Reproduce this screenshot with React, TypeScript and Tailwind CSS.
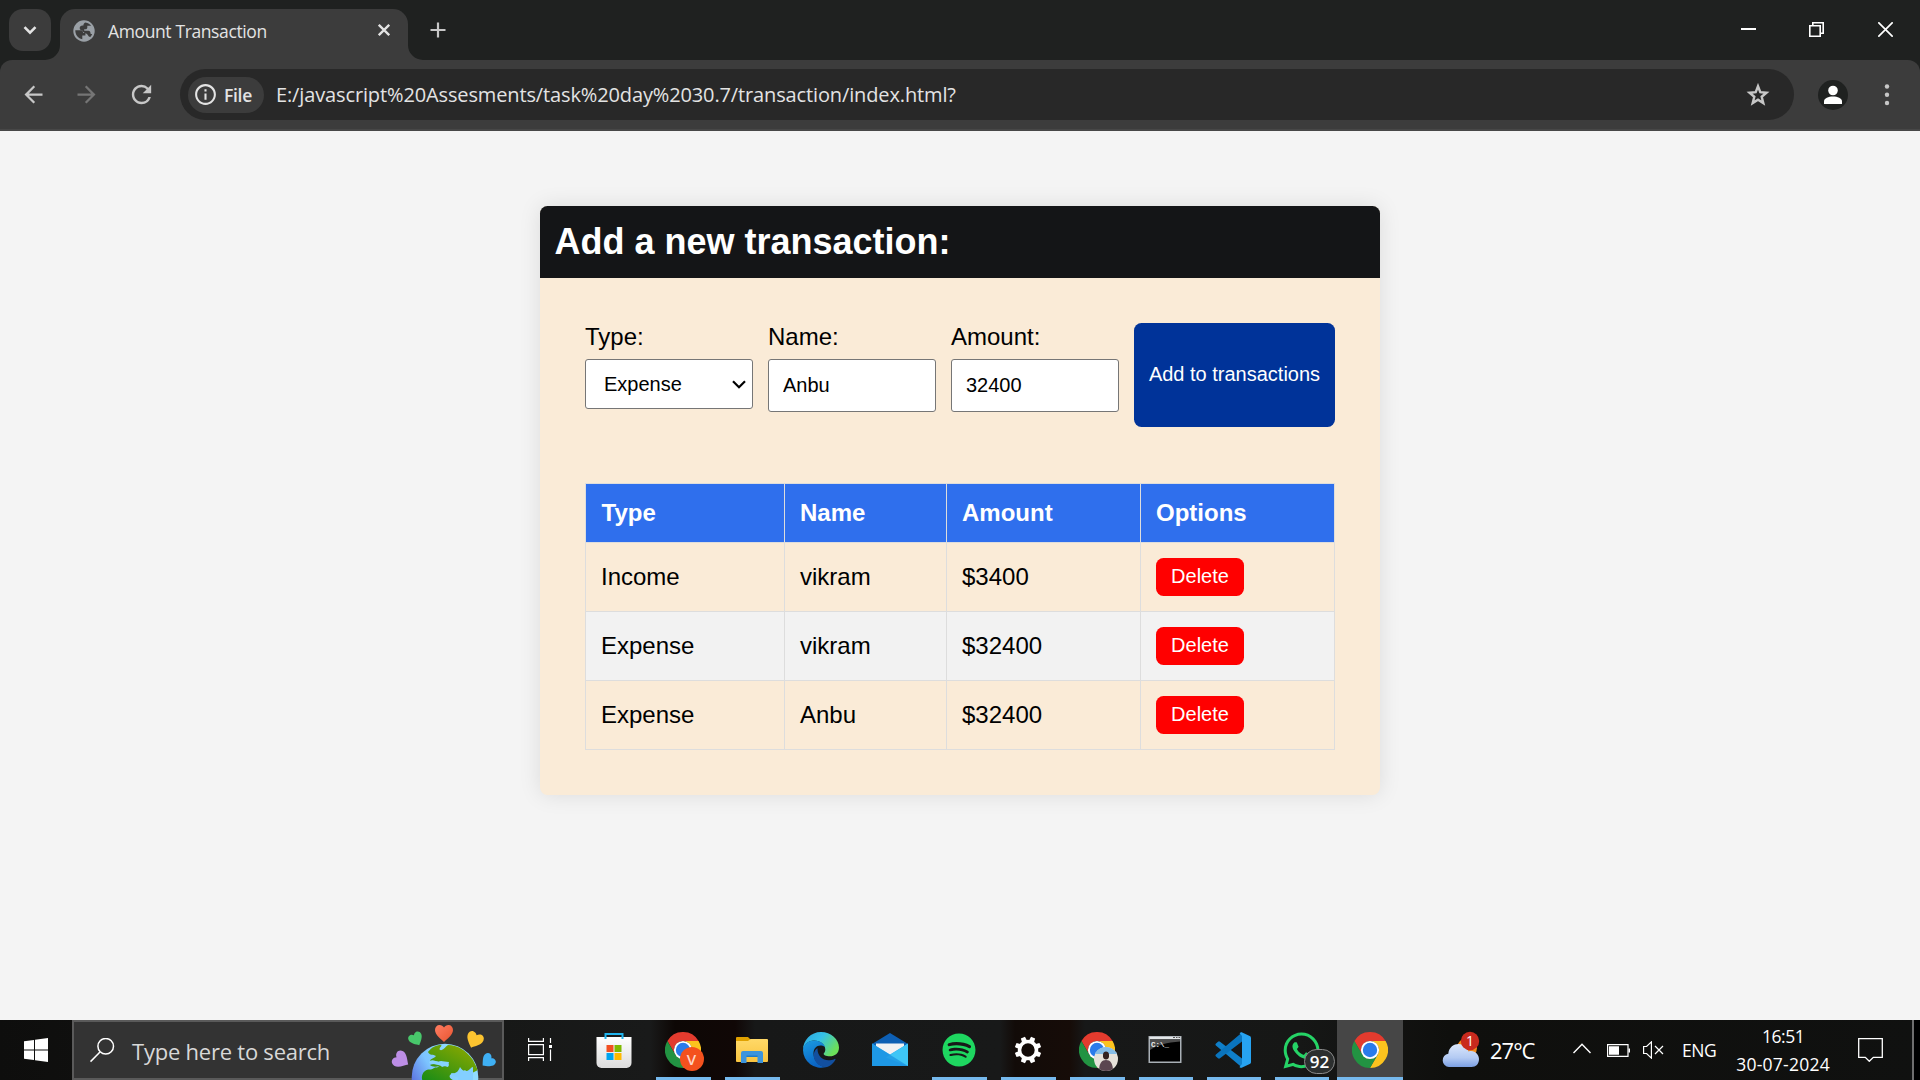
import type { ReactNode } from "react";
import { MdArrowBack, MdArrowForward, MdInfoOutline, MdRefresh } from "react-icons/md";
import { FaSpotify, FaWhatsapp } from "react-icons/fa";

/* ---------- Browser chrome ---------- */

function TabStrip() {
  return (
    <div className="flex h-[60px] items-start bg-[#1f2120]">
      <div className="mt-[9px] ml-[9px] flex size-[42px] items-center justify-center rounded-[14px] bg-[#3c3c3c]">
        <svg width="42" height="42" viewBox="0 0 42 42" fill="none" stroke="#e3e3e3" strokeWidth="2.6">
          <path d="M15.5 18.2l5.5 5.5 5.5-5.5" />
        </svg>
      </div>
      <svg className="mt-[45px] -ml-[6px]" width="15" height="15" viewBox="0 0 15 15">
        <path d="M15 0v15H0A15 15 0 0 0 15 0z" fill="#3c3c3c" />
      </svg>
      <div className="mt-[9px] flex h-[51px] w-[348px] rounded-t-[15px] bg-[#3c3c3c] pl-[13px]">
        <svg className="mt-[10.5px]" width="22" height="22" viewBox="0 0 22 22">
          <circle cx="11" cy="11" r="10.7" fill="#9aa0a6" />
          <path
            d="M2.3 10.300h5.200c1.900 0 2.600 1 2.600 2.600h2.300v2.600H9.300v3.800C5.200 18.500 2.300 15.200 2.300 10.300z"
            fill="#3c3c3c"
          />
          <path
            d="M12.300 2.400c3 .4 4.700 1.700 5.900 3.400h-3.900v1.700c0 1-.8 1.800-1.800 1.800h-1.300v1.500h4.300c1 0 1.700.7 1.900 1.700l.3 1.500h1.500c-.4 1.200-1 2.100-1.900 3-2.400-.3-2.200-3.300-4.400-3.600-1.500-.2-3-1.400-3.200-2.600-2.200-.2-3-1.400-3-2.800 0-1.500 1.200-2.600 2.800-2.600h.9c0-1.400.7-2.600 1.900-3z"
            fill="#3c3c3c"
          />
        </svg>
        <div className="mt-[6px] ml-[13px] w-[270px] font-['Open_Sans',sans-serif] text-[17.5px] leading-[32px] tracking-[-0.38px] text-[#e3e3e3]">
          Amount Transaction
        </div>
        <svg className="mt-[15px]" width="12" height="12" viewBox="0 0 12 12" stroke="#e3e3e3" strokeWidth="2.3">
          <path d="M.8.8l10.400 10.400M11.200.8L.8 11.200" />
        </svg>
      </div>
      <svg className="mt-[45px]" width="15" height="15" viewBox="0 0 15 15">
        <path d="M0 0v15h15A15 15 0 0 1 0 0z" fill="#3c3c3c" />
      </svg>
      <svg className="mt-[22px] ml-[7px]" width="16" height="16" viewBox="0 0 16 16" stroke="#c7c7c7" strokeWidth="2.2">
        <path d="M8 .5v15M.5 8h15" />
      </svg>
      <div className="mt-[22px] mr-[27px] ml-auto flex">
        <svg className="mr-[53px]" width="15" height="15" viewBox="0 0 15 15" stroke="#fff" strokeWidth="2">
          <path d="M0 7h15" />
        </svg>
        <svg className="mr-[54px]" width="15" height="15" viewBox="0 0 15 15" fill="none" stroke="#fff" strokeWidth="1.6">
          <path d="M.8 3.800h10.400v10.400H.8zM3.800 3.800V.8h10.400v10.400h-3" />
        </svg>
        <svg width="15" height="15" viewBox="0 0 15 15" stroke="#fff" strokeWidth="1.7">
          <path d="M.3.3l14.400 14.400M14.700.3L.3 14.700" />
        </svg>
      </div>
    </div>
  );
}

function Toolbar() {
  return (
    <div className="h-[71px] bg-[#1f2120]">
      <div className="flex h-[71px] items-start rounded-t-[12px] border-b-2 border-[#474747] bg-[#3c3c3c]">
        <MdArrowBack className="mt-[21px] ml-[19.5px] size-[27px] text-[#c7c7c7]" />
        <MdArrowForward className="mt-[21px] ml-[26.5px] size-[27px] text-[#757575]" />
        <MdRefresh className="mt-[20px] ml-[26.5px] size-[29px] text-[#c7c7c7]" />
        <div className="mt-[9px] ml-[24.5px] flex h-[51px] w-[1614px] items-center rounded-full bg-[#282828] pl-2">
          <div className="flex h-9 w-[76px] items-center rounded-full bg-[#3c3c3c] pl-[5px]">
            <MdInfoOutline className="size-[25px] text-[#e3e3e3]" />
            <span className="ml-[6px] font-['Open_Sans',sans-serif] text-[17.5px] leading-[32px] font-semibold tracking-[-0.3px] text-[#e3e3e3]">
              File
            </span>
          </div>
          <div className="ml-3 flex-1 font-['Open_Sans',sans-serif] text-[20px] leading-[32px] tracking-[-0.13px] whitespace-nowrap text-[#e3e3e3]">
            E:/javascript%20Assesments/task%20day%2030.7/transaction/index.html?
          </div>
          <svg className="mr-[24px]" width="24" height="24" viewBox="0 0 24 24" fill="none" stroke="#c7c7c7" strokeWidth="2.400">
            <path d="M12 3.200l2.300 6 6.200.5-4.800 4.100 1.600 6.300L12 16.700l-5.300 3.400 1.600-6.300-4.800-4.100 6.200-.5z" />
          </svg>
        </div>
        <svg className="mt-[20px] ml-6" width="30" height="30" viewBox="0 0 30 30">
          <circle cx="15" cy="15" r="15" fill="#1f2120" />
          <circle cx="15" cy="10.5" r="4.8" fill="#fff" />
          <path d="M6 24v-2.500c0-3.300 4.500-5 9-5s9 1.700 9 5V24z" fill="#fff" />
        </svg>
        <svg className="mt-[24px] ml-[36px]" width="6" height="22" viewBox="0 0 6 22" fill="#c7c7c7">
          <circle cx="3" cy="2.5" r="2.2" />
          <circle cx="3" cy="10.7" r="2.2" />
          <circle cx="3" cy="19" r="2.2" />
        </svg>
      </div>
    </div>
  );
}

/* ---------- Page ---------- */

const rows = [
  { type: "Income", name: "vikram", amount: "$3400" },
  { type: "Expense", name: "vikram", amount: "$32400" },
  { type: "Expense", name: "Anbu", amount: "$32400" },
];

function Field({ label, children }: { label: string; children: ReactNode }) {
  return (
    <div className="w-[168px]">
      <div className="h-9 text-2xl leading-[27px]">{label}</div>
      {children}
    </div>
  );
}

function TransactionCard() {
  return (
    <div className="mx-auto h-[589px] w-[840px] rounded-[7.5px] bg-[#faebd7] font-['Liberation_Sans',Arial,sans-serif] text-black shadow-[0_0_22px_rgba(0,0,0,0.1)]">
      <h2 className="h-[72px] rounded-t-[7.5px] bg-[#141517] px-[14.5px] pt-[15px] text-[36px] leading-[41px] font-bold text-white">
        Add a new transaction:
      </h2>
      <div className="px-[45px] pt-[45px]">
        <div className="flex gap-[15px]">
          <Field label="Type:">
            <div className="flex h-[50px] items-center rounded-[3px] border border-[#767676] bg-white pr-[6px] pl-[18px] text-[20px]">
              <span className="flex-1">Expense</span>
              <svg width="14" height="9" viewBox="0 0 14 9" fill="none" stroke="#000" strokeWidth="2.2">
                <path d="M1 1.200l6 6 6-6" />
              </svg>
            </div>
          </Field>
          <Field label="Name:">
            <input
              className="block h-[53px] w-full rounded-[3px] border border-[#767676] bg-white px-[14px] text-[20px]"
              defaultValue="Anbu"
            />
          </Field>
          <Field label="Amount:">
            <input
              className="block h-[53px] w-full rounded-[3px] border border-[#767676] bg-white px-[14px] text-[20px]"
              defaultValue="32400"
            />
          </Field>
          <button className="h-[104px] w-[201px] rounded-[7.5px] bg-[#003399] pb-[3px] text-[20px] whitespace-nowrap text-white">
            Add to transactions
          </button>
        </div>
        <table className="mt-[56px] w-[750px] table-fixed border-collapse text-left text-2xl">
          <colgroup>
            <col className="w-[199px]" />
            <col className="w-[162px]" />
            <col className="w-[194px]" />
            <col className="w-[194px]" />
          </colgroup>
          <thead>
            <tr className="h-[59px] bg-[#2f6fed] text-white">
              {["Type", "Name", "Amount", "Options"].map((h) => (
                <th
                  key={h}
                  className="border border-[#dddddd] px-[15px] pt-0 pb-[2px] leading-[27px] font-bold first:pl-[15.5px]"
                >
                  {h}
                </th>
              ))}
            </tr>
          </thead>
          <tbody>
            {rows.map((r, i) => (
              <tr key={i} className="h-[69px] even:bg-[#f2f2f2]">
                <td className="border border-[#dddddd] px-[15px] pt-0 pb-[2px] leading-[27px]">{r.type}</td>
                <td className="border border-[#dddddd] px-[15px] pt-0 pb-[2px] leading-[27px]">{r.name}</td>
                <td className="border border-[#dddddd] px-[15px] pt-0 pb-[2px] leading-[27px]">{r.amount}</td>
                <td className="border border-[#dddddd] px-[15px] py-0">
                  <button className="block h-[38px] w-[88px] rounded-[7.5px] bg-[#ff0000] pb-[2px] text-[20px] leading-[23px] text-white">
                    Delete
                  </button>
                </td>
              </tr>
            ))}
          </tbody>
        </table>
      </div>
    </div>
  );
}

/* ---------- Taskbar icons ---------- */

function ChromeLogo() {
  return (
    <svg width="36" height="36" viewBox="0 0 36 36">
      <path d="M2.410 9A18 18 0 0 1 33.590 9H18A9 9 0 0 0 10.210 22.500z" fill="#e33b2e" />
      <path d="M33.590 9A18 18 0 0 1 18 36L25.790 22.500A9 9 0 0 0 18 9z" fill="#fcc31e" />
      <path d="M18 36A18 18 0 0 1 2.410 9L10.210 22.500A9 9 0 0 0 25.790 22.500z" fill="#229342" />
      <circle cx="18" cy="18" r="9.1" fill="#fff" />
      <circle cx="18" cy="18" r="7.2" fill="#2a7bea" />
    </svg>
  );
}

function StoreIcon() {
  return (
    <svg width="36" height="36" viewBox="0 0 36 36">
      <defs>
        <linearGradient id="store" x1="0" y1="0" x2="0" y2="1">
          <stop offset="0" stopColor="#fff" />
          <stop offset="1" stopColor="#dcdcdc" />
        </linearGradient>
      </defs>
      <path d="M.5 5h35v26a5 5 0 0 1-5 5h-25a5 5 0 0 1-5-5z" fill="url(#store)" />
      <path d="M9.500 7V2h17v5" fill="none" stroke="#1fb4ee" strokeWidth="2" />
      <path d="M10.500 13h7v7h-7z" fill="#f25022" />
      <path d="M18.500 13h7v7h-7z" fill="#7fba00" />
      <path d="M10.500 21h7v7h-7z" fill="#00a4ef" />
      <path d="M18.500 21h7v7h-7z" fill="#ffb900" />
    </svg>
  );
}

function ExplorerIcon() {
  return (
    <svg width="36" height="36" viewBox="0 0 36 36">
      <defs>
        <linearGradient id="folder" x1="0" y1="0" x2="0" y2="1">
          <stop offset="0" stopColor="#ffd968" />
          <stop offset="1" stopColor="#f9c440" />
        </linearGradient>
      </defs>
      <path d="M2 6a1 1 0 0 1 1-1h11l2.500 2.500L14 11H2z" fill="#e0a100" />
      <path d="M2 9h12l2.500-2H33a1 1 0 0 1 1 1v21a1 1 0 0 1-1 1H3a1 1 0 0 1-1-1z" fill="url(#folder)" />
      <path d="M7 31V21a2 2 0 0 1 2-2h18a2 2 0 0 1 2 2v10h-5.500v-6h-11v6z" fill="#3c94dc" />
      <path d="M12.500 25h11v-1.500h-11z" fill="#1e7ac8" />
    </svg>
  );
}

function EdgeIcon() {
  return (
    <svg width="36" height="36" viewBox="0 0 36 36">
      <defs>
        <linearGradient id="edgeTop" x1="0" y1="0" x2="1" y2=".5">
          <stop offset="0" stopColor="#2aa5dd" />
          <stop offset=".5" stopColor="#35c1e8" />
          <stop offset="1" stopColor="#6be05a" />
        </linearGradient>
        <linearGradient id="edgeLeft" x1="0" y1="0" x2=".4" y2="1">
          <stop offset="0" stopColor="#1b9de2" />
          <stop offset="1" stopColor="#0a63c4" />
        </linearGradient>
      </defs>
      <path
        d="M0 18C0 8 8 0 18 0s18 7.500 18 15.500c0 6-4.500 8.800-9 8.800-4.300 0-6.700-1.500-6.300-2.800.8-.9 1.600-2.200 1.600-4.100C22.300 12.500 17 8.500 11 8.500 5.500 8.500 1.500 12 0 18z"
        fill="url(#edgeTop)"
      />
      <path
        d="M0 18c.3-5.500 5.300-9.500 11-9.500 5.200 0 9.800 2.600 11 6.500-6-3.500-11.500 0-11.500 6.500 0 7 5.500 13 12.500 13.600A18 18 0 0 1 0 18z"
        fill="url(#edgeLeft)"
      />
      <path
        d="M14.500 16c-4.500 3-5 9.500-1.500 14 3.500 4.800 9 6.500 13 4.200 2.800-1.500 5.200-4 6.500-6.700.2-.6-.4-.9-.9-.6C23 31 14 26 14.500 16z"
        fill="#124f9f"
      />
    </svg>
  );
}

function MailIcon() {
  return (
    <svg width="36" height="36" viewBox="0 0 36 36">
      <path d="M0 12L18 1l18 11v4H0z" fill="#0d5fb4" />
      <path d="M4 11.500h28V20L18 30 4 20z" fill="#f1f1f3" />
      <path d="M0 11.500L18 22.500l18-11V34H0z" fill="#2ba9ee" />
      <path d="M36 11.500L14 25.500 36 34z" fill="#3ec6f6" />
      <path d="M0 11.500L36 34H0z" fill="#1b93e2" opacity=".75" />
    </svg>
  );
}

function GearIcon() {
  const teeth = [22.5, 67.5, 112.5, 157.5, 202.5, 247.5, 292.5, 337.5];
  return (
    <svg width="36" height="36" viewBox="0 0 36 36">
      <circle cx="18" cy="18" r="8.5" fill="none" stroke="#fff" strokeWidth="3.6" />
      {teeth.map((a) => (
        <path key={a} d="M15.300 9.500l.5-4.800h4.400l.5 4.800z" fill="#fff" transform={`rotate(${a} 18 18)`} />
      ))}
    </svg>
  );
}

function TerminalIcon() {
  return (
    <svg width="36" height="36" viewBox="0 0 36 36">
      <path d="M1.500 4h33v27h-33z" fill="#a9b0b6" />
      <path d="M2.500 4.800h31v2.200h-31z" fill="#e3e6e8" />
      <path d="M26 5h2v1h-2zM29 5h1.500v1H29zM31.500 5H33v1h-1.500z" fill="#555" />
      <path d="M3 7.500h30V29.500H3z" fill="#000" />
      <path d="M3 7.500h30v2C20 10.500 10 13 3 18z" fill="#4c4c4c" />
      <text x="4" y="14.5" fill="#eee" fontFamily="Liberation Mono, monospace" fontSize="7.5" fontWeight="bold">
        C:\_
      </text>
    </svg>
  );
}

function CodeIcon() {
  return (
    <svg width="36" height="36" viewBox="0 0 36 36">
      <path d="M1 11.500l2-1.800a1.500 1.500 0 0 1 2 0L27 26.500V35.500L.900 13.500a1.400 1.400 0 0 1 .100-2z" fill="#0f7fc9" />
      <path d="M1 24.500l2 1.800a1.500 1.500 0 0 0 2 0L27 9.500V.500L.900 22.500a1.400 1.400 0 0 0 .100 2z" fill="#0a74bd" />
      <path
        d="M25.500 35.700c-.8-.3-1-.6-1-.6l2.500-3V4l-2.500-3s.3-.4 1.200-.6c.5-.2 1-.1 1.500.1l7.500 3.500c.8.400 1.300 1.200 1.300 2v24c0 .9-.5 1.600-1.300 2l-7.500 3.600c-.5.200-1.100.3-1.700.1z"
        fill="#27a3f1"
      />
    </svg>
  );
}

function TaskViewIcon() {
  return (
    <svg width="24" height="24" viewBox="0 0 24 24" fill="none" stroke="#fff" strokeWidth="1.2">
      <path d="M.6 0v3.400h14.800V0M.6 6.600h14.800v10H.6zM.6 23v-3.400h14.800V23M22.500 0v5M22.500 11.500V23" />
      <path d="M21 7h3v3h-3z" fill="#fff" stroke="none" />
    </svg>
  );
}

function Heart({ x, y, size, angle, color }: { x: number; y: number; size: number; angle: number; color: string }) {
  return (
    <path
      d="M0 9C-3 6-9 2-9-3c0-3 2-5 4.500-5C-2.500-8-1-7 0-5.500 1-7 2.500-8 4.500-8 7-8 9-6 9-3c0 5-6 9-9 12z"
      fill={color}
      transform={`translate(${x} ${y}) rotate(${angle}) scale(${size})`}
    />
  );
}

function EarthArt() {
  return (
    <svg width="106" height="60" viewBox="0 0 106 60">
      <defs>
        <linearGradient id="ocean" x1="0" y1=".6" x2=".7" y2=".2">
          <stop offset="0" stopColor="#5a6fe0" />
          <stop offset=".45" stopColor="#7cc4ff" />
          <stop offset="1" stopColor="#90dcff" />
        </linearGradient>
        <linearGradient id="land" x1="0" y1="1" x2=".8" y2="0">
          <stop offset="0" stopColor="#128a18" />
          <stop offset="1" stopColor="#8aa800" />
        </linearGradient>
        <linearGradient id="redHeart" x1="0" y1="0" x2="1" y2="1">
          <stop offset="0" stopColor="#ff7d62" />
          <stop offset="1" stopColor="#e8542f" />
        </linearGradient>
        <clipPath id="globe">
          <circle cx="55" cy="57" r="33.3" />
        </clipPath>
      </defs>
      <circle cx="55" cy="57" r="33.3" fill="url(#ocean)" />
      <g clipPath="url(#globe)">
        <path
          d="M38 32c4-5 8-7 13-7 2 1-3 3-1 5 3 1 5-3 8-5 9 0 18 5 25 15l5 10-6 3c-5 2-5-5-9-2-3 2 0 4-3 4-4-1-7-3-10 0-2 4 4 4 5 8H34c-3-3-3-9 1-12 3-3 6 0 9-3 2-1 4 0 5-2-3 1-7 1-9-1 3-2 7 0 10-2-3-3-6-1-9-1-3-3 3-3 5-6-3-2-6 0-8-4z"
          fill="url(#land)"
        />
        <path d="M39 43c1-5 7-2 9-1 3-2 6 0 11 0-1 3 1 2-1 5-3-1-4-1-6 0-2-3-8-2-13-4z" fill="#86d3ff" />
        <path d="M61 53c5 1 7-1 9-6 2 3 4 5 7 4s4-4 6-4v13H68c1-5-6-2-7-7z" fill="#83cfff" />
      </g>
      <Heart x={54} y={13} size={1} angle={0} color="url(#redHeart)" />
      <Heart x={26} y={19} size={0.78} angle={-28} color="#48c76b" />
      <Heart x={84.5} y={20} size={0.94} angle={24} color="#fcc430" />
      <Heart x={11} y={40} size={0.94} angle={-58} color="#bd8ee6" />
      <Heart x={98} y={41} size={0.78} angle={50} color="#3fb0f4" />
    </svg>
  );
}

function WeatherIcon() {
  return (
    <svg width="38" height="38" viewBox="0 0 38 38">
      <defs>
        <linearGradient id="cloud" x1="0" y1="0" x2="0" y2="1">
          <stop offset="0" stopColor="#dbe7fb" />
          <stop offset=".6" stopColor="#b3caf3" />
          <stop offset="1" stopColor="#7b9fe2" />
        </linearGradient>
      </defs>
      <circle cx="25" cy="17" r="10" fill="#f08a1c" />
      <path
        d="M7 36a6.700 6.700 0 0 1-.7-13.300C7 16 12 13 16.500 13c5 0 8.500 3 10 7.500C32 18.500 37 23 37 28c0 5-3 8-7.500 8z"
        fill="url(#cloud)"
      />
      <circle cx="28" cy="10" r="9.2" fill="#c92a1e" />
      <text x="28" y="15" fill="#fff" fontFamily="Open Sans, sans-serif" fontSize="14" textAnchor="middle">
        1
      </text>
    </svg>
  );
}

/* ---------- Taskbar ---------- */

type Slot = { icon: ReactNode; width: string; line?: string };

const slots: Slot[] = [
  { icon: <StoreIcon />, width: "w-[69px]" },
  {
    width: "w-[69px]",
    line: "w-[55px]",
    icon: (
      <>
        <ChromeLogo />
        <span className="absolute top-[15px] left-[15px] flex size-[24px] items-center justify-center rounded-full bg-[#f4511e] font-['Open_Sans',sans-serif] text-[15px] leading-none font-semibold text-[#ffd6c8]">
          V
        </span>
      </>
    ),
  },
  { icon: <ExplorerIcon />, width: "w-[69px]", line: "w-[55px]" },
  { icon: <EdgeIcon />, width: "w-[69px]" },
  { icon: <MailIcon />, width: "w-[69px]" },
  { icon: <FaSpotify className="size-[34px] text-[#1ed760]" />, width: "w-[69px]", line: "w-[55px]" },
  { icon: <GearIcon />, width: "w-[69px]", line: "w-[55px]" },
  {
    width: "w-[69px]",
    line: "w-[55px]",
    icon: (
      <>
        <ChromeLogo />
        <svg className="absolute top-[15px] left-[15.5px]" width="24" height="24" viewBox="0 0 24 24">
          <defs>
            <clipPath id="avatar">
              <circle cx="12" cy="12" r="12" />
            </clipPath>
          </defs>
          <g clipPath="url(#avatar)">
            <path d="M0 0h24v24H0z" fill="#e6e2da" />
            <path d="M0 0h24v7H0z" fill="#86bde6" />
            <path d="M5 24c0-8 3-11 7-11s7 3 7 11z" fill="#5b4650" />
            <path d="M9 7.500c0-4 6-4 6 0v2c0 4-6 4-6 0z" fill="#33221f" />
          </g>
        </svg>
      </>
    ),
  },
  { icon: <TerminalIcon />, width: "w-[68px]", line: "w-[54px]" },
  { icon: <CodeIcon />, width: "w-[68px]", line: "w-[54px]" },
  {
    width: "w-[68px]",
    line: "w-[54px]",
    icon: (
      <>
        <FaWhatsapp className="size-[41px] shrink-0 text-[#25d366]" />
        <span className="absolute top-[17px] left-[21px] flex h-[25px] w-[31px] items-center justify-center rounded-full border border-[#8a8a8a] bg-[#2c2f2f] font-['Open_Sans',sans-serif] text-[17px] leading-none font-semibold text-white">
          92
        </span>
      </>
    ),
  },
];

function Taskbar() {
  return (
    <div className="flex h-[60px] bg-[linear-gradient(90deg,#0e0e0d_0px,#171817_500px,#191a1a_650px,#0d0705_675px,#100706_735px,#171818_755px,#181919_1000px,#120b08_1015px,#160c08_1070px,#171818_1085px,#161716_1300px,#0f0f0d_1450px,#101110_1920px)] font-['Open_Sans',sans-serif] text-white">
      <div className="w-[72px] pt-[18px] pl-6">
        <svg width="24" height="24" viewBox="0 0 24 24" fill="#fff">
          <path d="M0 3.300l10-1.400v9.600H0zM11 1.800L24 0v11.500H11zM0 12.500h10v9.600l-10-1.400zM11 12.500h13V24l-13-1.800z" />
        </svg>
      </div>
      <div className="relative flex w-[432px] border-2 border-[#5a5a5a] bg-[#333333]">
        <svg className="mt-4 ml-4" width="25" height="25" viewBox="0 0 25 25" fill="none" stroke="#fff" strokeWidth="1.5">
          <circle cx="15.7" cy="8.3" r="7.8" />
          <path d="M10 14L.5 23.600" />
        </svg>
        <span className="mt-[11px] ml-[17px] text-[22px] leading-[36px] tracking-[-0.23px] whitespace-nowrap text-[#d8d8d8]">
          Type here to search
        </span>
        <div className="absolute -top-[2px] right-[6px]">
          <EarthArt />
        </div>
      </div>
      <div className="w-[76px] pt-[18px] pl-6">
        <TaskViewIcon />
      </div>
      {slots.map((s, i) => (
        <div key={i} className={`flex shrink-0 flex-col items-center ${s.width}`}>
          <div className="flex h-[57px] items-center pt-[3px] pr-[2px]">
            <div className="relative flex size-9 items-center justify-center">{s.icon}</div>
          </div>
          {s.line && <div className={`h-[3px] bg-[#76b9ed] ${s.line}`} />}
        </div>
      ))}
      <div className="ml-px flex w-[66px] shrink-0 flex-col items-center bg-[#464646]">
        <div className="flex h-[57px] items-center pt-[3px]">
          <ChromeLogo />
        </div>
        <div className="h-[3px] w-full bg-[#76b9ed]" />
      </div>
      <div className="ml-[39px] flex pt-[11px]">
        <WeatherIcon />
        <span className="ml-[10px] w-[83px] text-[22px] leading-[39px] tracking-[-1px]">27°C</span>
      </div>
      <div className="flex pt-[19px]">
        <svg className="mt-1" width="18" height="11" viewBox="0 0 18 11" fill="none" stroke="#fff" strokeWidth="1.4">
          <path d="M.5 10L9 1.300l8.500 8.700" />
        </svg>
        <svg className="mt-[5px] ml-[16px]" width="23" height="13" viewBox="0 0 23 13">
          <path d="M.6.6h20.400v11.800H.6z" fill="none" stroke="#fff" strokeWidth="1.2" />
          <path d="M2 2.300h10v8.500H2zM21.500 4.500H23v4h-1.500z" fill="#fff" />
        </svg>
        <svg className="mt-[2px] ml-[13px]" width="21" height="18" viewBox="0 0 21 18" fill="none" stroke="#fff" strokeWidth="1.2">
          <path d="M.6 5.500h3L8.400.9v16.200L3.600 12.500h-3zM12 5l8 8M20 5l-8 8" />
        </svg>
        <span className="-mt-[1px] ml-[18px] text-[17.5px] leading-6 tracking-[-0.5px]">ENG</span>
      </div>
      <div className="ml-[19px] flex w-[96px] flex-col items-center text-[17.5px] leading-[28px] whitespace-nowrap">
        <span className="mt-[2px] tracking-[-0.5px]">16:51</span>
        <span className="tracking-[0.25px]">30-07-2024</span>
      </div>
      <svg className="mt-[18px] ml-auto" width="25" height="24" viewBox="0 0 25 24" fill="none" stroke="#fff" strokeWidth="1.3">
        <path d="M.7.7h23.600v18.600h-9l-4 4-4-4H.7z" />
      </svg>
      <div className="ml-[29px] w-2 border-l-2 border-[#6e6e6e] bg-black" />
    </div>
  );
}

export default function App() {
  return (
    <div className="flex h-[1080px] w-[1920px] flex-col overflow-hidden bg-[#f4f4f4]">
      <TabStrip />
      <Toolbar />
      <main className="flex-1 pt-[75px]">
        <TransactionCard />
      </main>
      <Taskbar />
    </div>
  );
}
